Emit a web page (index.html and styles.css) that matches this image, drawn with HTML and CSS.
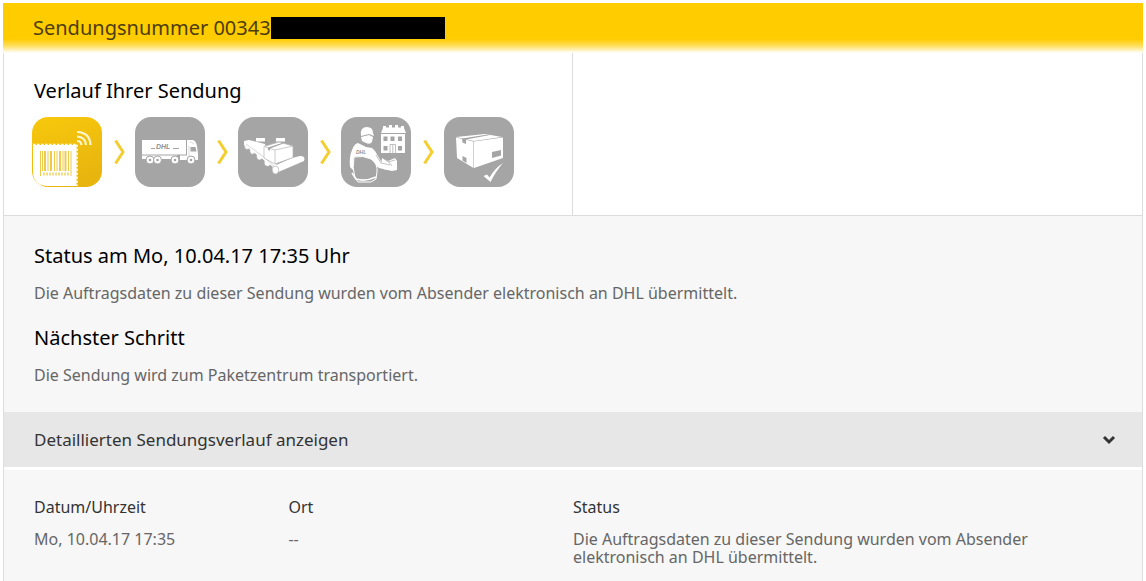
FILE: index.html
```html
<!DOCTYPE html>
<html lang="de">
<head>
    <meta charset="UTF-8">
    <meta name="viewport" content="width=device-width, initial-scale=1.0">
    <title>Sendungsverfolgung</title>
    <link rel="stylesheet" href="styles.css">
</head>
<body>
    <main class="shipment">
        <header class="shipment-header">
            <h1>Sendungsnummer 00343</h1>
            <span class="redacted"></span>
        </header>

        <section class="progress">
            <div class="progress-main">
                <h2>Verlauf Ihrer Sendung</h2>
                <ol class="steps">
                    <li class="step">
                        <!-- Auftragsdaten -->
                        <svg class="step-icon" viewBox="0 0 70 70" role="img" aria-label="Auftragsdaten">
                            <defs>
                                <linearGradient id="gold" x1="0" y1="0" x2="0.3" y2="1">
                                    <stop offset="0" stop-color="#f8c80c"/>
                                    <stop offset="1" stop-color="#e8b50f"/>
                                </linearGradient>
                            </defs>
                            <rect width="70" height="70" rx="16" fill="url(#gold)"/>
                            <path d="M1 28H44.500V69H16Q1 69 1 54Z" fill="#fff"/>
                            <path d="M1 27.500H45V69" fill="none" stroke="#fff" stroke-width="1.500" stroke-dasharray="2.500 1.500"/>
                            <g fill="#eecb4c">
                                <path d="M8 34h1v25h-1zM10 34h1v20h-1zM12 34h2v20h-2zM15.500 34h1v20h-1zM18 34h2v20h-2zM22 34h1v20h-1zM24.500 34h1v20h-1zM27 34h2v20h-2zM30.500 34h1v20h-1zM32.500 34h2v20h-2zM36 34h1v20h-1zM38.500 34h1v25h-1z"/>
                            </g>
                            <path d="M11 57H37" stroke="#f3dc86" stroke-width="3" stroke-dasharray="2 1"/>
                            <g fill="none" stroke="#fff6cf" stroke-width="2.200">
                                <path d="M45 24Q49 24 49.500 28M45 19.500Q53.500 20 54 28M45 15Q58 15.500 58.500 28"/>
                            </g>
                        </svg>
                    </li>
                    <li class="step">
                        <svg class="step-arrow" viewBox="0 0 11 26" aria-hidden="true"><path d="M1.500 1.500L9 13L1.500 24.500"/></svg>
                        <!-- Transport -->
                        <svg class="step-icon" viewBox="0 0 70 70" role="img" aria-label="Transport">
                            <rect width="70" height="70" rx="16" fill="#a5a5a5"/>
                            <g fill="#fff">
                                <path d="M7 23H51V37.500H7ZM7 38.500H42V42H7ZM52 23H58Q61 24 62 29L63 37V43H45V38.500H52Z"/>
                            </g>
                            <path d="M55.500 30H60.500L61.500 34.500H55.500Z" fill="#a5a5a5"/>
                            <path d="M54 29V41M55 24.500L59 27" stroke="#c7c7c7" stroke-width="0.700"/>
                            <g fill="#fff" stroke="#a5a5a5" stroke-width="1">
                                <circle cx="15" cy="43" r="4"/><circle cx="22.500" cy="43" r="4"/><circle cx="40" cy="43" r="4"/><circle cx="56" cy="43" r="4"/>
                            </g>
                            <g fill="#a5a5a5">
                                <circle cx="15" cy="43" r="1.300"/><circle cx="22.500" cy="43" r="1.300"/><circle cx="40" cy="43" r="1.300"/><circle cx="56" cy="43" r="1.300"/>
                            </g>
                            <path d="M16 31.500H20M38 31.500H44" stroke="#a5a5a5" stroke-width="1"/>
                            <text class="truck-brand" x="21" y="32">DHL</text>
                        </svg>
                    </li>
                    <li class="step">
                        <svg class="step-arrow" viewBox="0 0 11 26" aria-hidden="true"><path d="M1.500 1.500L9 13L1.500 24.500"/></svg>
                        <!-- Paketzentrum -->
                        <svg class="step-icon" viewBox="0 0 70 70" role="img" aria-label="Paketzentrum">
                            <rect width="70" height="70" rx="16" fill="#a5a5a5"/>
                            <path d="M18 21H27V24.500H18ZM38 21H47V24.500H38Z" fill="#fff"/>
                            <g fill="#fff" stroke="#a5a5a5" stroke-width="0.600">
                                <ellipse cx="9" cy="29" rx="2.500" ry="3.500"/>
                                <ellipse cx="14.500" cy="33.500" rx="2.700" ry="3.700"/>
                                <ellipse cx="21.500" cy="39" rx="3" ry="4"/>
                                <ellipse cx="29.500" cy="45" rx="3.300" ry="4.300"/>
                            </g>
                            <path d="M6 24L11 23L27 27L30 40L40 49L35 50L6 28Z" fill="#fff"/>
                            <path d="M8 27L27 41L37 50" fill="none" stroke="#bcbcbc" stroke-width="0.600"/>
                            <path d="M36 49L54 41L62 39Q68 39 66 44L38 56Q34 55 34 51Z" fill="#fff"/>
                            <ellipse cx="37.500" cy="53" rx="3.200" ry="4" fill="#fff" stroke="#b5b5b5" stroke-width="0.700"/>
                            <g fill="#fff" stroke="#b5b5b5" stroke-width="0.700">
                                <path d="M26 29.500L41 25L55 29V40.500L37 47L26 41Z"/>
                                <path d="M26 29.500L37 33V47M37 33L55 29"/>
                            </g>
                            <path d="M30 30.500L44 26L45.500 26.500L32 31.500V33.500L30 33Z" fill="#a5a5a5"/>
                        </svg>
                    </li>
                    <li class="step">
                        <svg class="step-arrow" viewBox="0 0 11 26" aria-hidden="true"><path d="M1.500 1.500L9 13L1.500 24.500"/></svg>
                        <!-- Zustellung -->
                        <svg class="step-icon" viewBox="0 0 70 70" role="img" aria-label="Zustellung">
                            <rect width="70" height="70" rx="16" fill="#a5a5a5"/>
                            <g fill="#fff">
                                <path d="M40 16L42 11V9H45V10.500H48V8H51V10.500H54V8H57V10.500H60V9H63V11L65 16ZM40 17H64V36H40Z"/>
                                <path d="M20 18Q19 10 26 10Q32 10 32 16L33 19L28 17L20 19Z"/>
                                <path d="M20 20L28 18L32 20L31 25Q29 28 25 26L21 24Z"/>
                                <path d="M17 26L25 30L31 31L34 34L41 46L48 47L54 50L47 53L38 51L32 46Q22 38 13 40L12 53L9 50Q8 40 11 33Q13 27 17 26Z"/>
                                <path d="M41 41L47 44L54 41L56 44V53L51 54L42 52L40 49Z"/>
                            </g>
                            <path d="M13 40Q22 38 30 42Q37 47 36 55L35 62L30 65L17 65L14 61Q11 51 13 40Z" fill="#a5a5a5" stroke="#fff" stroke-width="1"/>
                            <path d="M11 56L15 62Q24 65 35 60" fill="none" stroke="#fff" stroke-width="1.500"/>
                            <path d="M35 38L40 46L49 48M42 41L47 45L54 43M48 45L51 49" fill="none" stroke="#a5a5a5" stroke-width="0.700"/>
                            <g fill="#a5a5a5">
                                <path d="M42.500 19.500H46.500V24H42.500ZM49.500 19.500H53.500V24H49.500ZM57 19.500H61V24H57ZM42.500 29H46.500V33.500H42.500ZM57 29H61V33.500H57Z"/>
                            </g>
                            <path d="M49 36V27.500H54.500V36M51.800 28V36" fill="none" stroke="#a5a5a5" stroke-width="0.700"/>
                            <text class="coat-brand" x="15" y="37">DHL</text>
                        </svg>
                    </li>
                    <li class="step">
                        <svg class="step-arrow" viewBox="0 0 11 26" aria-hidden="true"><path d="M1.500 1.500L9 13L1.500 24.500"/></svg>
                        <!-- Zugestellt -->
                        <svg class="step-icon" viewBox="0 0 70 70" role="img" aria-label="Zugestellt">
                            <rect width="70" height="70" rx="16" fill="#a5a5a5"/>
                            <path d="M12 20L41 17L58 20L30 24Z" fill="#fff"/>
                            <path d="M12 20.500L29.500 24.500V51L13 41ZM30 24.500L59 20.500V41L30 51Z" fill="#fff"/>
                            <path d="M18 21.500L44 17.500L46 18L22 22.500V27L18.500 25.500ZM18.500 39L22.500 41V46L18.500 43.500ZM48 35L57 33V38.500L48 41Z" fill="#a5a5a5"/>
                            <path d="M39.500 59L43 57.500L45.500 60.500Q51 51 59 46Q52 54 46.500 65Z" fill="#fff"/>
                        </svg>
                    </li>
                </ol>
            </div>
            <div class="progress-side"></div>
        </section>

        <section class="status">
            <h2>Status am Mo, 10.04.17 17:35 Uhr</h2>
            <p>Die Auftragsdaten zu dieser Sendung wurden vom Absender elektronisch an DHL übermittelt.</p>
            <h2>Nächster Schritt</h2>
            <p>Die Sendung wird zum Paketzentrum transportiert.</p>
        </section>

        <button class="toggle" type="button" aria-expanded="true" aria-controls="details">
            <span>Detaillierten Sendungsverlauf anzeigen</span>
            <svg class="toggle-icon" viewBox="0 0 14 10" aria-hidden="true"><path d="M2 2L7 7L12 2"/></svg>
        </button>

        <section class="details" id="details">
            <table class="history">
                <thead>
                    <tr>
                        <th class="col-date" scope="col">Datum/Uhrzeit</th>
                        <th class="col-place" scope="col">Ort</th>
                        <th scope="col">Status</th>
                    </tr>
                </thead>
                <tbody>
                    <tr>
                        <td>Mo, 10.04.17 17:35</td>
                        <td>--</td>
                        <td>Die Auftragsdaten zu dieser Sendung wurden vom Absender elektronisch an DHL übermittelt.</td>
                    </tr>
                </tbody>
            </table>
        </section>
    </main>
</body>
</html>
```
FILE: styles.css
```css
* {
    box-sizing: border-box;
}

body {
    margin: 0;
    padding: 3px 3px 0;
    background-color: #ffffff;
    color: #666666;
    font-family: "Noto Sans", "Open Sans", sans-serif;
    font-size: 16px;
    line-height: 18px;
}

h1,
h2,
p {
    margin: 0;
}

h1,
h2 {
    font-size: 20px;
    font-weight: 400;
    line-height: 28px;
}

h2 {
    color: #000000;
}

.shipment {
    display: flex;
    flex-direction: column;
    min-height: calc(100vh - 3px);
    border: 1px solid #dddddd;
    border-top: none;
    border-bottom: none;
}

.shipment-header {
    display: flex;
    align-items: center;
    height: 50px;
    margin: 0 -1px;
    padding: 0 30px;
    background: linear-gradient(#ffcc00 72%, #ffdf60 86%, #ffffff);
}

.shipment-header h1 {
    color: #4d3c0c;
}

.redacted {
    width: 174px;
    height: 22px;
    background-color: #000000;
}

.progress {
    display: grid;
    grid-template-columns: 1fr 1fr;
    border-bottom: 1px solid #dddddd;
}

.progress-main {
    padding: 24px 28px 28px;
    border-right: 1px solid #dddddd;
}

.progress-main h2 {
    padding-left: 2px;
}

.steps {
    display: flex;
    margin: 12px 0 0;
    padding: 0;
    list-style: none;
}

.step {
    display: flex;
    align-items: center;
}

.step-icon {
    display: block;
    width: 70px;
    height: 70px;
}

.step-arrow {
    width: 11px;
    height: 26px;
    margin: 0 10px 0 12px;
    fill: none;
    stroke: #f4cd30;
    stroke-width: 3;
}

.truck-brand,
.coat-brand {
    fill: #929292;
    font-family: "Liberation Sans", sans-serif;
    font-style: italic;
    font-weight: 700;
}

.truck-brand {
    font-size: 7px;
}

.coat-brand {
    font-size: 5px;
}

.status {
    padding: 26px 30px 28px;
    background-color: #f7f7f7;
}

.status p {
    margin: 14px 0 22px;
}

.status p:last-child {
    margin-bottom: 0;
}

.toggle {
    display: flex;
    align-items: center;
    justify-content: space-between;
    width: 100%;
    height: 55px;
    padding: 0 26px 0 30px;
    border: none;
    background-color: #e7e7e7;
    color: #333333;
    font-family: inherit;
    font-size: 17px;
    cursor: pointer;
}

.toggle-icon {
    width: 14px;
    height: 10px;
    fill: none;
    stroke: #333333;
    stroke-width: 3;
}

.details {
    flex: 1;
    margin-top: 3px;
    padding: 28px 30px 12px;
    background-color: #f7f7f7;
}

.history {
    width: 100%;
    border-collapse: collapse;
    table-layout: fixed;
}

.history th,
.history td {
    padding: 0 24px 14px 0;
    text-align: left;
    vertical-align: top;
}

.history th {
    color: #333333;
    font-weight: 400;
}

.history td:last-child {
    padding-right: 0;
}

.col-date {
    width: 23.600%;
}

.col-place {
    width: 26.400%;
}
```
